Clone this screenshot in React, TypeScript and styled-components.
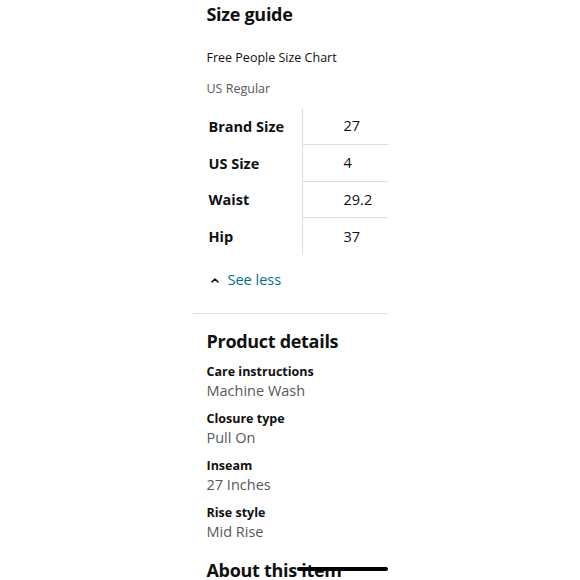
import { FC, Fragment } from "react";
import styled, { createGlobalStyle } from "styled-components";

const GlobalStyle = createGlobalStyle`
  html, body {
    margin: 0;
    padding: 0;
    background: #ffffff;
  }
  body {
    font-family: "Open Sans", "Noto Sans", Arial, sans-serif;
    color: #0f1111;
    -webkit-font-smoothing: antialiased;
  }
`;

const Page = styled.div`
  width: 580px;
  height: 580px;
  overflow: hidden;
  display: flex;
  justify-content: center;
`;

const Column = styled.div`
  position: relative;
  width: 195px;
  display: flex;
  flex-direction: column;
`;

const Section = styled.section`
  padding: 0 0 0 14px;
  display: flex;
  flex-direction: column;
`;

const Heading = styled.h2<{ $top: number }>`
  margin: ${(p) => p.$top}px 0 0;
  font-size: 18px;
  line-height: 24px;
  font-weight: 700;
  letter-spacing: -0.3px;
`;

const LastHeading = styled(Heading)`
  line-height: 18px;
`;

const Subtitle = styled.div<{ $muted?: boolean; $top: number }>`
  margin-top: ${(p) => p.$top}px;
  font-size: 12.5px;
  line-height: 18px;
  color: ${(p) => (p.$muted ? "#565959" : "#0f1111")};
`;

const Table = styled.div`
  margin-top: 10px;
  display: grid;
  grid-template-columns: 96px 85px;
  grid-auto-rows: 36.75px;
`;

const LabelCell = styled.div`
  display: flex;
  align-items: center;
  padding-left: 2px;
  font-size: 14.5px;
  font-weight: 700;
  border-right: 1px solid #dddddd;
`;

const ValueCell = styled.div<{ $last?: boolean }>`
  box-sizing: border-box;
  display: flex;
  align-items: center;
  padding-left: 41px;
  font-size: 14.5px;
  border-bottom: ${(p) => (p.$last ? "none" : "1px solid #dddddd")};
`;

const SeeLess = styled.button`
  margin-top: 14px;
  padding: 0 0 0 4px;
  border: none;
  background: none;
  display: flex;
  align-items: center;
  gap: 9px;
  font-family: inherit;
  font-size: 14.5px;
  line-height: 22px;
  color: #007185;
  cursor: pointer;
`;

const Divider = styled.div`
  margin-top: 22px;
  border-top: 1px solid #e0e0e0;
`;

const DetailLabel = styled.div<{ $top: number }>`
  margin-top: ${(p) => p.$top}px;
  font-size: 12.5px;
  line-height: 18px;
  font-weight: 700;
`;

const DetailValue = styled.div`
  font-size: 14.5px;
  line-height: 20px;
  color: #565959;
`;

const HomeIndicator = styled.div`
  position: absolute;
  left: 104px;
  top: 567px;
  width: 91px;
  height: 4px;
  border-radius: 2px;
  background: #000000;
`;

const sizes = [
  { label: "Brand Size", value: "27" },
  { label: "US Size", value: "4" },
  { label: "Waist", value: "29.2" },
  { label: "Hip", value: "37" },
];

const details = [
  { label: "Care instructions", value: "Machine Wash" },
  { label: "Closure type", value: "Pull On" },
  { label: "Inseam", value: "27 Inches" },
  { label: "Rise style", value: "Mid Rise" },
];

const App: FC = () => {
  return (
    <>
      <GlobalStyle />
      <Page>
        <Column>
          <Section>
            <Heading $top={2}>Size guide</Heading>
            <Subtitle $top={23}>Free People Size Chart</Subtitle>
            <Subtitle $muted $top={13}>
              US Regular
            </Subtitle>
            <Table>
              {sizes.map((row, i) => (
                <Fragment key={row.label}>
                  <LabelCell>{row.label}</LabelCell>
                  <ValueCell $last={i === sizes.length - 1}>{row.value}</ValueCell>
                </Fragment>
              ))}
            </Table>
            <SeeLess>
              <svg width="8" height="6" viewBox="0 0 8 6" aria-hidden>
                <path
                  d="M1 5 L4 2 L7 5"
                  fill="none"
                  stroke="#0f1111"
                  strokeWidth="1.6"
                  strokeLinecap="round"
                  strokeLinejoin="round"
                />
              </svg>
              See less
            </SeeLess>
          </Section>
          <Divider />
          <Section>
            <Heading $top={15}>Product details</Heading>
            {details.map((d, i) => (
              <div key={d.label}>
                <DetailLabel $top={i === 0 ? 10 : 9}>{d.label}</DetailLabel>
                <DetailValue>{d.value}</DetailValue>
              </div>
            ))}
            <LastHeading $top={19}>About this item</LastHeading>
          </Section>
          <HomeIndicator />
        </Column>
      </Page>
    </>
  );
};

export default App;
